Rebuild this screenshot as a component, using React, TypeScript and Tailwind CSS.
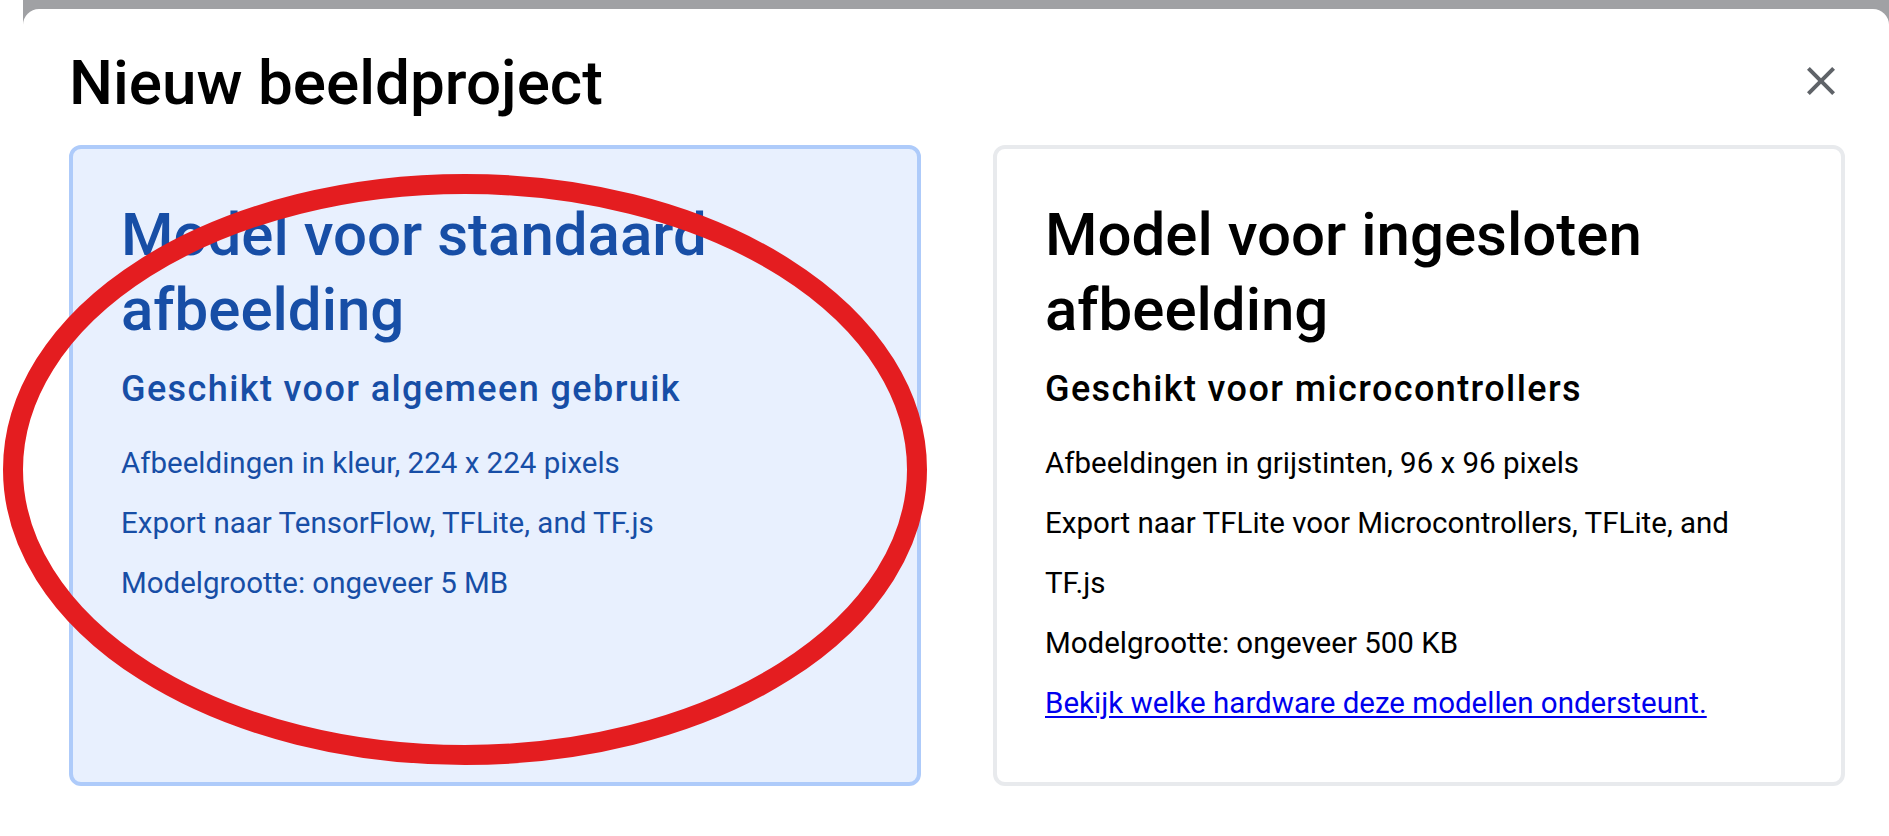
import { ReactNode } from "react";

interface ModelCardProps {
  title: ReactNode;
  subtitle: string;
  lines: ReactNode[];
  selected?: boolean;
  link?: string;
}

function ModelCard({ title, subtitle, lines, selected, link }: ModelCardProps) {
  const tone = selected
    ? "border-[#aecbfa] bg-[#e8f0fe] text-[#174ea6]"
    : "border-[#e8eaed] bg-white text-black";

  return (
    <div className={`rounded-[12px] border-4 px-[48px] pt-[48px] pb-[49px] ${tone}`}>
      <h2 className="text-[60px] font-medium leading-[75px]">{title}</h2>
      <h3 className="mt-[18px] text-[36px] font-medium leading-[48px] tracking-[1.4px]">
        {subtitle}
      </h3>
      <div className="mt-[20px] text-[29.5px] leading-[60px]">
        {lines.map((line, i) => (
          <p key={i}>{line}</p>
        ))}
        {link && (
          <p>
            <a href="#" className="text-[#0000ee] underline underline-offset-[3px]">
              {link}
            </a>
          </p>
        )}
      </div>
    </div>
  );
}

export default function App() {
  return (
    <div className="relative h-[836px] w-full overflow-hidden bg-white font-['Roboto','Noto_Sans',sans-serif]">
      <div className="ml-[23px] h-full bg-[#a0a1a4] pt-[9px]">
        <div className="h-full rounded-t-[16px] bg-white pl-[46px] pr-[44px] pt-[38px]">
          <div className="flex items-start justify-between">
            <h1 className="text-[62px] font-medium leading-[72px] text-black">
              Nieuw beeldproject
            </h1>
            <button
              type="button"
              aria-label="Sluiten"
              className="mt-[10px] flex h-12 w-12 items-center justify-center text-[#5f6368]"
            >
              <svg viewBox="0 0 24 24" className="h-12 w-12" fill="currentColor" aria-hidden="true">
                <path d="M19 6.41 17.59 5 12 10.59 6.41 5 5 6.41 10.59 12 5 17.59 6.41 19 12 13.41 17.59 19 19 17.59 13.41 12z" />
              </svg>
            </button>
          </div>

          <div className="mt-[26px] grid grid-cols-2 gap-[72px]">
            <ModelCard
              selected
              title={
                <>
                  Model voor standaard
                  <br />
                  afbeelding
                </>
              }
              subtitle="Geschikt voor algemeen gebruik"
              lines={[
                "Afbeeldingen in kleur, 224 x 224 pixels",
                "Export naar TensorFlow, TFLite, and TF.js",
                "Modelgrootte: ongeveer 5 MB",
              ]}
            />
            <ModelCard
              title={
                <>
                  Model voor ingesloten
                  <br />
                  afbeelding
                </>
              }
              subtitle="Geschikt voor microcontrollers"
              lines={[
                "Afbeeldingen in grijstinten, 96 x 96 pixels",
                <>
                  Export naar TFLite voor Microcontrollers, TFLite, and
                  <br />
                  TF.js
                </>,
                "Modelgrootte: ongeveer 500 KB",
              ]}
              link="Bekijk welke hardware deze modellen ondersteunt."
            />
          </div>
        </div>
      </div>

      {/* red hand-drawn marker round the first card */}
      <svg
        className="pointer-events-none absolute left-0 top-0"
        width="940"
        height="790"
        viewBox="0 0 940 790"
        aria-hidden="true"
      >
        <ellipse cx="465" cy="469.5" rx="452" ry="285.5" fill="none" stroke="#e41d20" strokeWidth="20" />
      </svg>
    </div>
  );
}
